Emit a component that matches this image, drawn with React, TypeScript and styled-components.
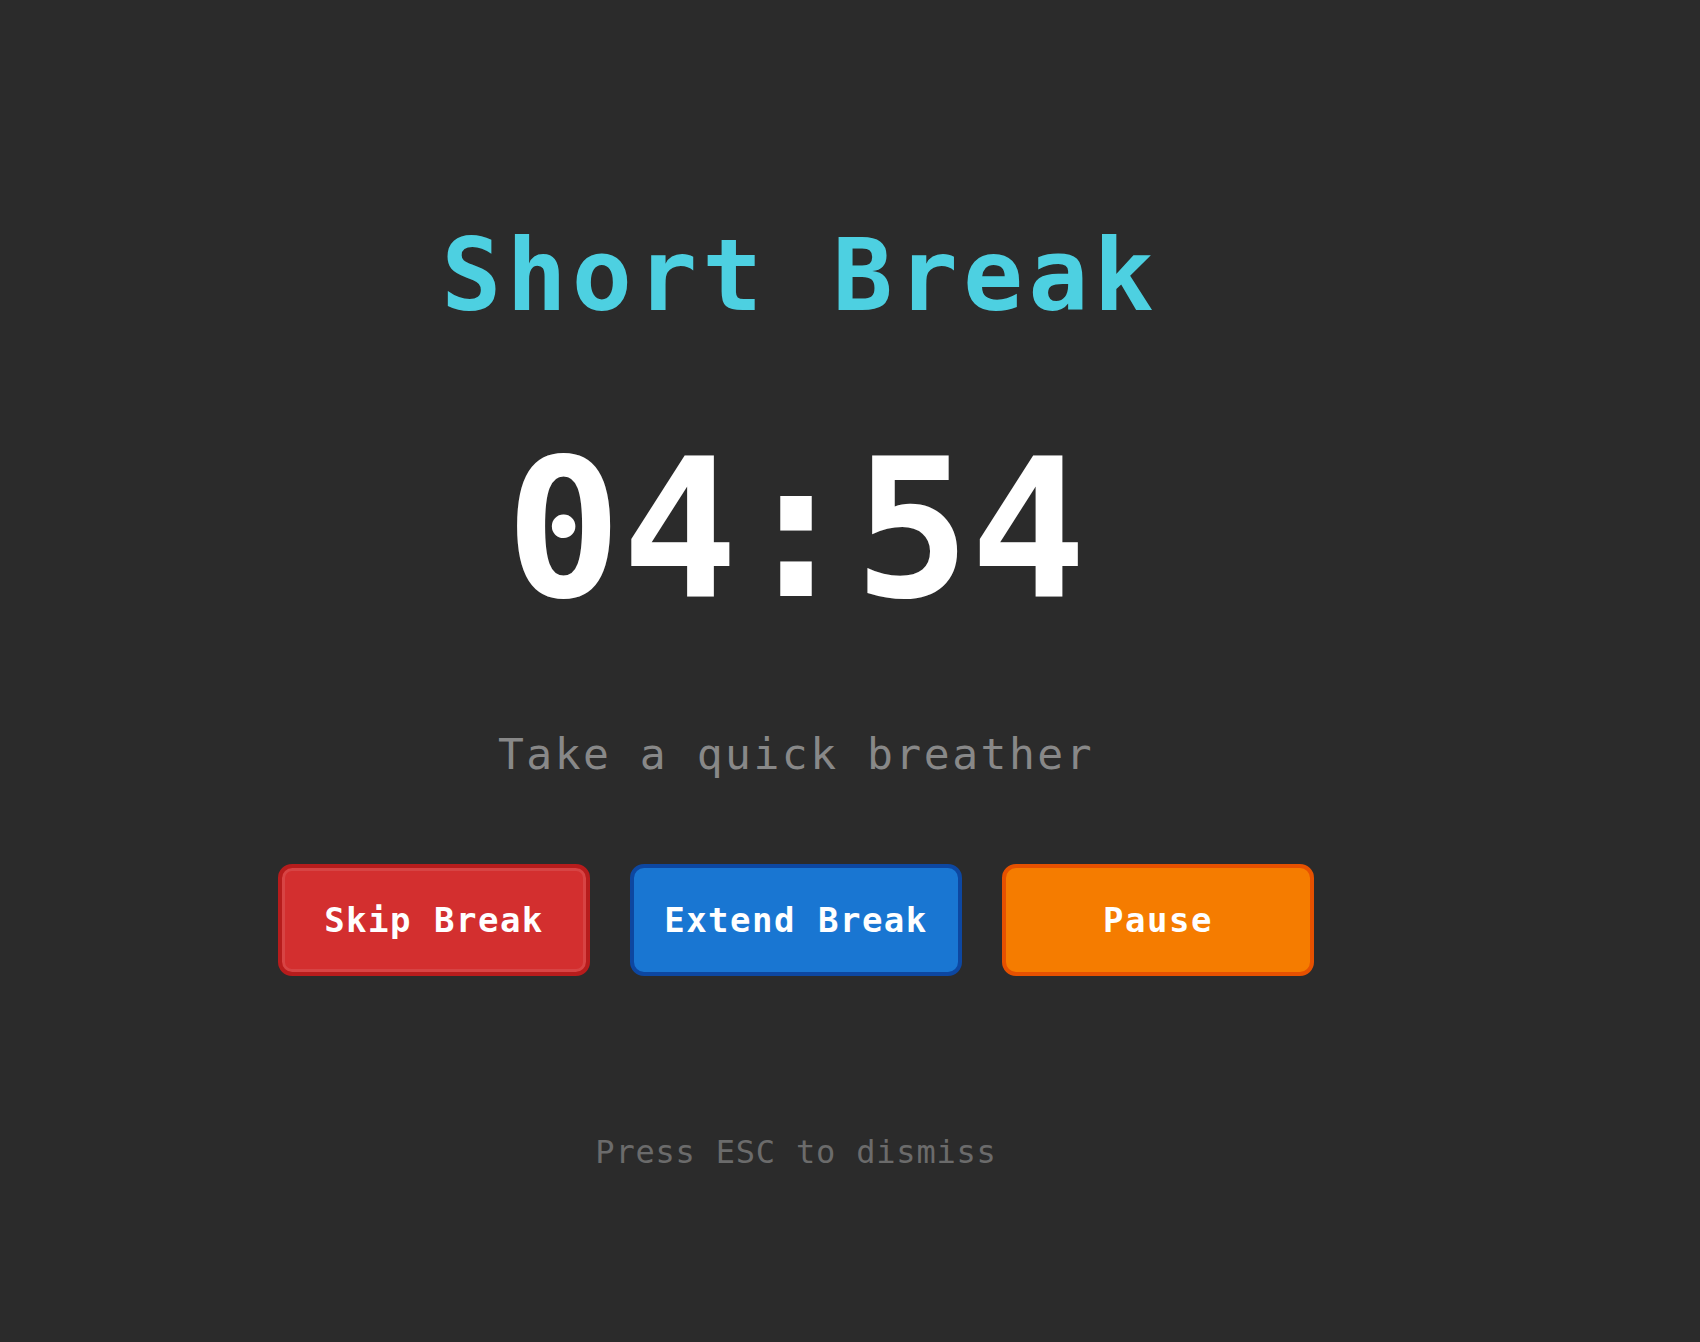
import styled, { createGlobalStyle } from 'styled-components';

const GlobalStyle = createGlobalStyle`
  html, body {
    margin: 0;
    padding: 0;
    background: #2b2b2b;
  }
  * {
    box-sizing: border-box;
  }
`;

const buttons = [
  { label: 'Skip Break', variant: 'red', width: 312 },
  { label: 'Extend Break', variant: 'blue', width: 332 },
  { label: 'Pause', variant: 'orange', width: 312 },
] as const;

type Variant = 'red' | 'blue' | 'orange';

const palette: Record<Variant, { bg: string; border: string; glow: string }> = {
  red: { bg: '#d32f2f', border: '#b71c1c', glow: 'rgba(255,255,255,0.1)' },
  blue: { bg: '#1976d2', border: '#0d47a1', glow: 'transparent' },
  orange: { bg: '#f57c00', border: '#e65100', glow: 'transparent' },
};

function App() {
  return (
    <>
      <GlobalStyle />
      <Screen>
        <Title>Short Break</Title>
        <Timer>04:54</Timer>
        <Message>Take a quick breather</Message>
        <Actions>
          {buttons.map(b => (
            <ActionButton key={b.label} $variant={b.variant} $width={b.width}>
              {b.label}
            </ActionButton>
          ))}
        </Actions>
        <Hint>Press ESC to dismiss</Hint>
      </Screen>
    </>
  );
}

export default App;

const Screen = styled.div`
  width: 1592px;
  height: 1342px;
  display: flex;
  flex-direction: column;
  align-items: center;
  padding-top: 218px;
  font-family: 'DejaVu Sans Mono', 'Liberation Mono', monospace;
`;

const Title = styled.h1`
  margin: 0 0 0 8px;
  font-size: 100px;
  line-height: 116px;
  font-weight: 700;
  letter-spacing: 5px;
  color: #4dd0e1;
`;

const Timer = styled.div`
  margin-top: 86px;
  font-size: 193px;
  line-height: 220px;
  font-weight: 700;
  letter-spacing: 0;
  color: #ffffff;
`;

const Message = styled.p`
  margin: 88px 0 0;
  font-size: 43px;
  line-height: 52px;
  letter-spacing: 2.5px;
  color: #888888;
`;

const Actions = styled.div`
  margin-top: 84px;
  display: flex;
  gap: 40px;
`;

const ActionButton = styled.button<{ $variant: Variant; $width: number }>`
  width: ${p => p.$width}px;
  height: 112px;
  border-radius: 14px;
  border: 4px solid ${p => palette[p.$variant].border};
  background: ${p => palette[p.$variant].bg};
  box-shadow: inset 0 0 0 3px ${p => palette[p.$variant].glow};
  color: #ffffff;
  font-family: 'DejaVu Sans Mono', 'Liberation Mono', monospace;
  font-size: 34px;
  font-weight: 700;
  letter-spacing: 1.5px;
  cursor: pointer;
`;

const Hint = styled.div`
  margin-top: 156px;
  font-size: 32px;
  line-height: 40px;
  letter-spacing: 0.8px;
  color: #6b6b6b;
`;
